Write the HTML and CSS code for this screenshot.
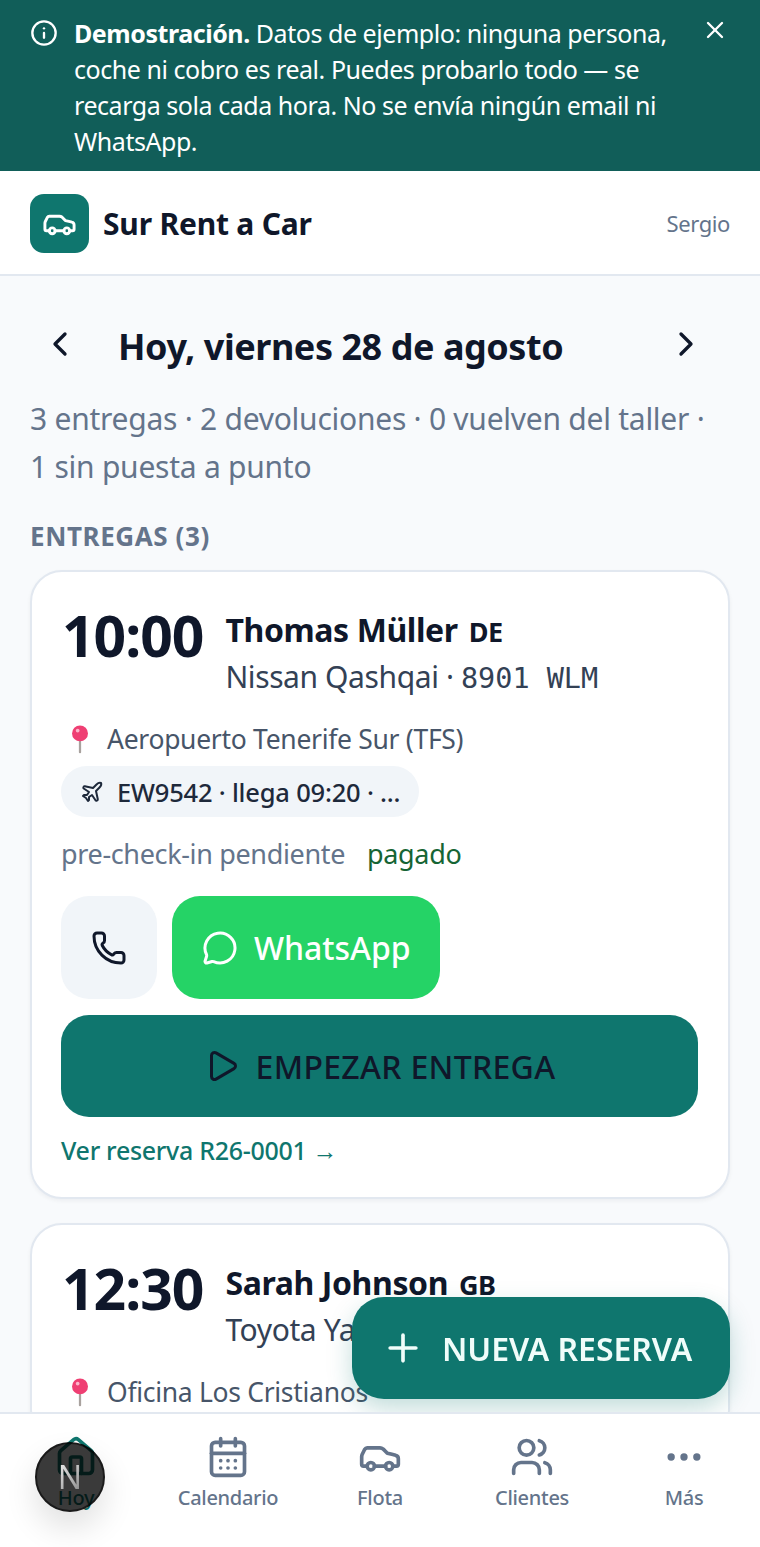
FILE: index.html
```html
<!DOCTYPE html>
<html lang="es">

<head>
  <meta charset="UTF-8">
  <meta name="viewport" content="width=device-width, initial-scale=1.0">
  <title>Sur Rent a Car</title>
  <link rel="stylesheet" href="styles.css">
</head>

<body>
  <div class="demo-banner">
    <svg class="icon demo-info" viewBox="0 0 24 24"><circle cx="12" cy="12" r="10"/><path d="M12 16v-4"/><path d="M12 8h.01"/></svg>
    <p class="demo-text"><strong>Demostración.</strong> Datos de ejemplo: ninguna persona, coche ni cobro es real. Puedes probarlo todo — se recarga sola cada hora. No se envía ningún email ni WhatsApp.</p>
    <svg class="icon demo-close" viewBox="0 0 24 24"><path d="M18 6 6 18"/><path d="m6 6 12 12"/></svg>
  </div>

  <header class="topbar">
    <div class="brand-logo">
      <svg class="icon" viewBox="0 0 24 24"><path d="M19 17h2c.6 0 1-.4 1-1v-3c0-.9-.7-1.7-1.5-1.9C18.7 10.6 16 10 16 10s-1.3-1.4-2.2-2.3c-.5-.4-1.1-.7-1.8-.7H5c-.6 0-1.1.4-1.4.9l-1.4 2.9A3.7 3.7 0 0 0 2 12v4c0 .6.4 1 1 1h2"/><circle cx="7" cy="17" r="2"/><path d="M9 17h6"/><circle cx="17" cy="17" r="2"/></svg>
    </div>
    <span class="brand-name">Sur Rent a Car</span>
    <span class="user-name">Sergio</span>
  </header>

  <main class="content">
    <div class="date-row">
      <svg class="icon date-arrow" viewBox="0 0 24 24"><path d="m15 18-6-6 6-6"/></svg>
      <h1 class="date-title">Hoy, viernes 28 de agosto</h1>
      <svg class="icon date-arrow" viewBox="0 0 24 24"><path d="m9 18 6-6-6-6"/></svg>
    </div>
    <p class="summary">3 entregas · 2 devoluciones · 0 vuelven del taller ·<br>1 sin puesta a punto</p>
    <h2 class="section-title">ENTREGAS (3)</h2>

    <article class="card">
      <div class="card-head">
        <div class="card-time">10:00</div>
        <div class="card-who">
          <div class="card-name">Thomas Müller <span class="card-country">DE</span></div>
          <div class="card-car">Nissan Qashqai · <span class="plate">8901 WLM</span></div>
        </div>
      </div>
      <div class="card-place">
        <svg class="pin" viewBox="0 0 24 32"><path d="M12 14v16" stroke="#a8a29e" stroke-width="2.4" stroke-linecap="round"/><circle cx="12" cy="10" r="8.5" fill="#ef3f73"/><circle cx="9.5" cy="7" r="2" fill="#fbb6ca"/></svg>
        <span>Aeropuerto Tenerife Sur (TFS)</span>
      </div>
      <div class="flight-chip">
        <svg class="icon" viewBox="0 0 24 24"><path d="M17.8 19.2 16 11l3.5-3.5C21 6 21.5 4 21 3c-1-.5-3 0-4.5 1.5L13 8 4.8 6.2c-.5-.1-.9.1-1.1.5l-.3.5c-.2.5-.1 1 .3 1.3L9 12l-2 3H4l-1 1 3 2 2 3 1-1v-3l3-2 3.5 5.3c.3.4.8.5 1.3.3l.5-.2c.4-.3.6-.7.5-1.2z"/></svg>
        <span>EW9542 · llega 09:20 · ...</span>
      </div>
      <div class="card-status">
        <span>pre-check-in pendiente</span>
        <span class="status-paid">pagado</span>
      </div>
      <div class="card-actions">
        <div class="btn-phone">
          <svg class="icon" viewBox="0 0 24 24"><path d="M13.832 16.568a1 1 0 0 0 1.213-.303l.355-.465A2 2 0 0 1 17 15h3a2 2 0 0 1 2 2v3a2 2 0 0 1-2 2A18 18 0 0 1 2 4a2 2 0 0 1 2-2h3a2 2 0 0 1 2 2v3a2 2 0 0 1-.8 1.6l-.468.351a1 1 0 0 0-.292 1.233 14 14 0 0 0 6.392 6.384"/></svg>
        </div>
        <div class="btn-whatsapp">
          <svg class="icon" viewBox="0 0 24 24"><path d="M2.992 16.342a2 2 0 0 1 .094 1.167l-1.065 3.29a1 1 0 0 0 1.236 1.168l3.413-.998a2 2 0 0 1 1.099.092 10 10 0 1 0-4.777-4.719"/></svg>
          <span>WhatsApp</span>
        </div>
      </div>
      <div class="btn-start">
        <svg class="icon" viewBox="0 0 24 24"><path d="M5 5a2 2 0 0 1 3.008-1.728l11.997 6.998a2 2 0 0 1 .003 3.458l-12 7A2 2 0 0 1 5 19z"/></svg>
        <span>EMPEZAR ENTREGA</span>
      </div>
      <div class="card-link">Ver reserva R26-0001 →</div>
    </article>

    <article class="card">
      <div class="card-head">
        <div class="card-time">12:30</div>
        <div class="card-who">
          <div class="card-name">Sarah Johnson <span class="card-country">GB</span></div>
          <div class="card-car">Toyota Yaris · <span class="plate">4512 KRT</span></div>
        </div>
      </div>
      <div class="card-place">
        <svg class="pin" viewBox="0 0 24 32"><path d="M12 14v16" stroke="#a8a29e" stroke-width="2.4" stroke-linecap="round"/><circle cx="12" cy="10" r="8.5" fill="#ef3f73"/><circle cx="9.5" cy="7" r="2" fill="#fbb6ca"/></svg>
        <span>Oficina Los Cristianos</span>
      </div>
    </article>
  </main>

  <div class="fab">
    <svg class="icon" viewBox="0 0 24 24"><path d="M5 12h14"/><path d="M12 5v14"/></svg>
    <span>NUEVA RESERVA</span>
  </div>

  <nav class="bottom-nav">
    <div class="nav-item nav-active">
      <svg class="icon" viewBox="0 0 24 24"><path d="M15 21v-8a1 1 0 0 0-1-1h-4a1 1 0 0 0-1 1v8"/><path d="M3 10a2 2 0 0 1 .709-1.528l7-6a2 2 0 0 1 2.582 0l7 6A2 2 0 0 1 21 10v9a2 2 0 0 1-2 2H5a2 2 0 0 1-2-2z"/></svg>
      <span>Hoy</span>
    </div>
    <div class="nav-item">
      <svg class="icon" viewBox="0 0 24 24"><path d="M8 2v4"/><path d="M16 2v4"/><rect width="18" height="18" x="3" y="4" rx="2"/><path d="M3 10h18"/><path d="M8 14h.01"/><path d="M12 14h.01"/><path d="M16 14h.01"/><path d="M8 18h.01"/><path d="M12 18h.01"/><path d="M16 18h.01"/></svg>
      <span>Calendario</span>
    </div>
    <div class="nav-item">
      <svg class="icon" viewBox="0 0 24 24"><path d="M19 17h2c.6 0 1-.4 1-1v-3c0-.9-.7-1.7-1.5-1.9C18.7 10.6 16 10 16 10s-1.3-1.4-2.2-2.3c-.5-.4-1.1-.7-1.8-.7H5c-.6 0-1.1.4-1.4.9l-1.4 2.9A3.7 3.7 0 0 0 2 12v4c0 .6.4 1 1 1h2"/><circle cx="7" cy="17" r="2"/><path d="M9 17h6"/><circle cx="17" cy="17" r="2"/></svg>
      <span>Flota</span>
    </div>
    <div class="nav-item">
      <svg class="icon" viewBox="0 0 24 24"><path d="M16 21v-2a4 4 0 0 0-4-4H6a4 4 0 0 0-4 4v2"/><path d="M16 3.128a4 4 0 0 1 0 7.744"/><path d="M22 21v-2a4 4 0 0 0-3-3.87"/><circle cx="9" cy="7" r="4"/></svg>
      <span>Clientes</span>
    </div>
    <div class="nav-item">
      <svg class="icon" viewBox="0 0 24 24"><circle cx="12" cy="12" r="1"/><circle cx="19" cy="12" r="1"/><circle cx="5" cy="12" r="1"/></svg>
      <span>Más</span>
    </div>
  </nav>

  <div class="dev-badge"></div>
  <div class="dev-letter">N</div>
</body>

</html>
```

FILE: styles.css
```css
* {
  box-sizing: border-box;
}

html,
body {
  margin: 0;
  height: 100%;
  overflow: hidden;
}

body {
  font-family: "Noto Sans", "Open Sans", sans-serif;
  background-color: #f8fafc;
  color: #0f172a;
}

.icon {
  display: block;
  fill: none;
  stroke: currentColor;
  stroke-width: 2;
  stroke-linecap: round;
  stroke-linejoin: round;
  flex-shrink: 0;
}

.demo-banner {
  display: flex;
  align-items: flex-start;
  height: 171px;
  padding: 15px 30px 0;
  background-color: #115e59;
  color: #fff;
}

.demo-info {
  width: 28px;
  height: 28px;
  margin-top: 4px;
  margin-right: 16px;
}

.demo-text {
  flex: 1;
  margin: 0;
  font-size: 25px;
  line-height: 36px;
  letter-spacing: -0.45px;
}

.demo-close {
  width: 28px;
  height: 28px;
  margin-top: 1px;
  margin-left: 20px;
  margin-right: 1px;
}

.topbar {
  display: flex;
  align-items: center;
  height: 105px;
  padding: 1px 30px 0;
  background-color: #fff;
  border-bottom: 2px solid #e2e8f0;
}

.brand-logo {
  display: flex;
  align-items: center;
  justify-content: center;
  width: 59px;
  height: 59px;
  margin-right: 14px;
  border-radius: 14px;
  background-color: #0f766e;
  color: #fff;
}

.brand-logo .icon {
  width: 35px;
  height: 35px;
}

.brand-name {
  flex: 1;
  font-size: 30px;
  font-weight: 700;
  letter-spacing: -0.2px;
}

.user-name {
  font-size: 22px;
  color: #64748b;
  letter-spacing: -0.4px;
}

.content {
  padding: 0 30px;
}

.date-row {
  display: flex;
  align-items: center;
  margin-top: 47px;
  padding: 0 24px 0 10px;
}

.date-arrow {
  width: 40px;
  height: 40px;
  margin-top: -7px;
}

.date-title {
  flex: 1;
  margin: 0;
  padding-left: 38px;
  font-size: 36px;
  font-weight: 700;
  line-height: 48px;
  letter-spacing: -0.45px;
}

.summary {
  margin: 24px 0 0;
  font-size: 30px;
  line-height: 48px;
  color: #64748b;
  letter-spacing: -0.25px;
}

.section-title {
  margin: 27px 0 0;
  font-size: 26px;
  font-weight: 700;
  line-height: 36px;
  color: #64748b;
  letter-spacing: 0.6px;
}

.card {
  margin-top: 16px;
  margin-bottom: 24px;
  padding: 30px 30px 28px 29px;
  background-color: #fff;
  border: 2px solid #e2e8f0;
  border-radius: 32px;
  box-shadow: 0 2px 4px rgba(15, 23, 42, 0.05);
}

.card + .card {
  margin-top: 0;
}

.card-head {
  display: flex;
  gap: 22px;
}

.card-time {
  height: 88px;
  margin-left: 1px;
  margin-top: -3px;
  font-size: 57px;
  font-weight: 700;
  line-height: 72px;
  letter-spacing: -1px;
}

.card-who {
  min-width: 0;
}

.card-name {
  margin-top: 4px;
  font-size: 32px;
  font-weight: 700;
  line-height: 48px;
  letter-spacing: -0.4px;
}

.card-country {
  margin-left: 3px;
  font-size: 27px;
  font-weight: 700;
}

.card-car {
  font-size: 30px;
  line-height: 42px;
  color: #334155;
  letter-spacing: -0.4px;
}

.plate {
  font-family: "DejaVu Sans Mono", monospace;
  font-size: 28.5px;
  letter-spacing: 0;
}

.card-place {
  display: flex;
  align-items: center;
  gap: 13px;
  margin-top: 19px;
  font-size: 26.5px;
  line-height: 40px;
  color: #475569;
  letter-spacing: -0.3px;
}

.pin {
  width: 24px;
  height: 30px;
  margin-left: 7px;
  margin-right: 2px;
}

.flight-chip {
  display: inline-flex;
  align-items: center;
  gap: 13px;
  height: 51px;
  margin-top: 7px;
  padding: 0 19px;
  border-radius: 26px;
  background-color: #f1f5f9;
  font-size: 25.5px;
  font-weight: 500;
  color: #1e293b;
  letter-spacing: -0.2px;
}

.flight-chip .icon {
  width: 24px;
  height: 24px;
}

.card-status {
  display: flex;
  gap: 22px;
  margin-top: 17px;
  font-size: 27px;
  line-height: 40px;
  color: #64748b;
  letter-spacing: -0.35px;
}

.status-paid {
  color: #166534;
}

.card-actions {
  display: flex;
  gap: 15px;
  margin-top: 22px;
}

.btn-phone {
  display: flex;
  align-items: center;
  justify-content: center;
  width: 96px;
  height: 103px;
  border-radius: 28px;
  background-color: #f1f5f9;
}

.btn-phone .icon {
  width: 36px;
  height: 36px;
}

.btn-whatsapp {
  display: flex;
  align-items: center;
  gap: 16px;
  height: 103px;
  padding: 0 29px 0 30px;
  border-radius: 28px;
  background-color: #25d366;
  color: #fff;
  font-size: 32px;
  font-weight: 500;
  letter-spacing: -0.05px;
}

.btn-whatsapp .icon {
  width: 36px;
  height: 36px;
}

.btn-start {
  display: flex;
  align-items: center;
  justify-content: center;
  gap: 16px;
  height: 102px;
  margin-top: 16px;
  border-radius: 28px;
  background-color: #0f766e;
  font-size: 32px;
  font-weight: 500;
  letter-spacing: 0.3px;
}

.btn-start .icon {
  width: 36px;
  height: 36px;
}

.card-link {
  margin-top: 14px;
  font-size: 25px;
  font-weight: 500;
  line-height: 38px;
  color: #0f766e;
  letter-spacing: -0.3px;
}

.fab {
  position: fixed;
  right: 30px;
  bottom: 148px;
  display: flex;
  align-items: center;
  gap: 17px;
  width: 378px;
  height: 102px;
  padding-left: 29px;
  border-radius: 32px;
  background-color: #0f766e;
  color: #f0fdfa;
  font-size: 32px;
  font-weight: 600;
  letter-spacing: -0.05px;
  box-shadow: 0 10px 24px rgba(15, 118, 110, 0.25);
}

.fab .icon {
  width: 44px;
  height: 44px;
}

.bottom-nav {
  position: fixed;
  left: 0;
  right: 0;
  bottom: 0;
  display: flex;
  height: 135px;
  padding-top: 21px;
  background-color: #fff;
  border-top: 2px solid #e2e8f0;
}

.nav-item {
  display: flex;
  flex: 1;
  flex-direction: column;
  align-items: center;
  gap: 4px;
  font-size: 20px;
  font-weight: 500;
  line-height: 30px;
  color: #64748b;
  letter-spacing: -0.3px;
}

.nav-item .icon {
  width: 44px;
  height: 44px;
}

.nav-active {
  color: #0f766e;
}

/* multiply so the tab under it shows through dark, the letter sits on top */
.dev-badge {
  position: fixed;
  left: 35px;
  bottom: 35px;
  width: 70px;
  height: 70px;
  border: 2px solid #1a1a1a;
  border-radius: 50%;
  background-color: #3a3a3a;
  box-shadow: 0 16px 32px rgba(0, 0, 0, 0.12);
  mix-blend-mode: multiply;
}

.dev-letter {
  position: fixed;
  left: 35px;
  bottom: 35px;
  width: 70px;
  font-size: 32px;
  line-height: 70px;
  text-align: center;
  background: linear-gradient(135deg, #f2f2f2 30%, #777 75%);
  -webkit-background-clip: text;
  background-clip: text;
  color: transparent;
}
```
